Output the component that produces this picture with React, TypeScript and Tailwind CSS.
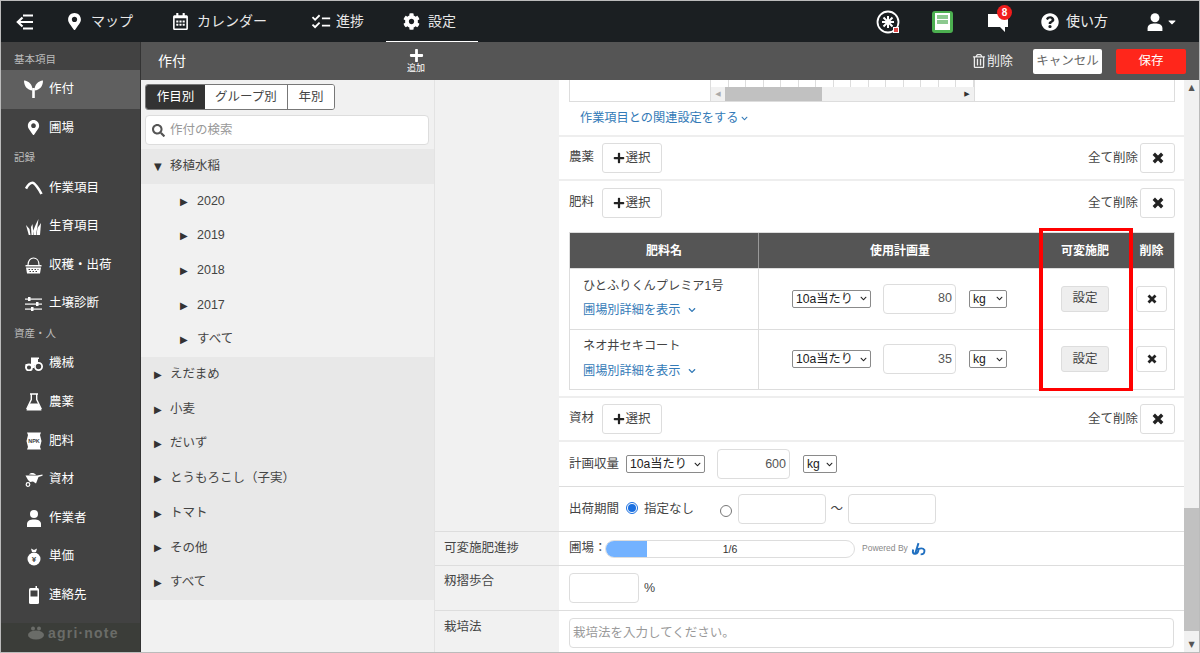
import React from 'react';
import {
  FaMapMarkerAlt,
  FaRegCalendarAlt,
  FaCog,
  FaQuestionCircle,
  FaPlus,
  FaSearch,
  FaRegTrashAlt,
  FaCaretDown,
  FaChevronDown,
} from 'react-icons/fa';
import { MdChecklist } from 'react-icons/md';

const FONT = "font-['Liberation_Sans','Noto_Sans_CJK_JP',sans-serif]";

function BackIcon() {
  return (
    <svg width="18" height="16" viewBox="0 0 18 16" fill="none" stroke="white" strokeWidth="2.2">
      <path d="M7 1.500H17M2 8H17M7 14.500H17" />
      <path d="M6.500 3.500L1.800 8L6.500 12.500" />
    </svg>
  );
}

function NavItem({ icon, label, active, className }: { icon: React.ReactNode; label: string; active?: boolean; className: string }) {
  return (
    <div className={`flex h-[42px] items-center text-[14px] text-[#e8e8e8] ${className} ${active ? 'border-b-2 border-white pt-[2px]' : ''}`}>
      {icon}
      <span>{label}</span>
    </div>
  );
}

function SideLabel({ text, className = 'h-[21.500px]' }: { text: string; className?: string }) {
  return <div className={`flex items-center pl-[13px] text-[10.500px] text-[#bdbdbd] ${className}`}>{text}</div>;
}

function SideItem({ icon, label, active }: { icon: React.ReactNode; label: string; active?: boolean }) {
  return (
    <div className={`flex h-[38.600px] items-center text-[12.500px] text-white ${active ? 'bg-[#5f5f5f]' : ''}`}>
      <span className="flex w-[47px] justify-center pl-[18px]">{icon}</span>
      <span className="pl-px">{label}</span>
    </div>
  );
}

function SeedIcon() {
  return (
    <svg width="19" height="18" viewBox="0 0 19 18" fill="white">
      <rect x="8.200" y="8" width="2.600" height="10" />
      <path d="M8.600 10.500C8.500 4.500 5 1 0 0.500C0 6 3 10 8.600 10.500Z" />
      <path d="M10.400 10.500C10.500 4.500 14 1 19 0.500C19 6 16 10 10.400 10.500Z" />
    </svg>
  );
}

function SickleIcon() {
  return (
    <svg width="18" height="14" viewBox="0 0 18 14" fill="none" stroke="white" strokeWidth="2.600">
      <path d="M1 7.500C3 4 5 1.800 7.500 1.800C9.500 1.800 14 8 16.500 13" />
    </svg>
  );
}

function GrowthIcon() {
  return (
    <svg width="16" height="16" viewBox="0 0 16 16" fill="white">
      <path d="M0 6L3.500 10L4.500 16H2.800Z" />
      <path d="M5.500 16L5 8L6.500 5L7.500 16Z" />
      <path d="M7 12L10 5L12.500 0L11.500 7L10 16H8Z" />
      <path d="M10.500 16L11.500 9L15 4L14 16Z" />
    </svg>
  );
}

function BasketIcon() {
  return (
    <svg width="17" height="17" viewBox="0 0 17 17">
      <path d="M3 8C3 3.500 5.500 1 8.500 1C11.500 1 14 3.500 14 8" fill="none" stroke="white" strokeWidth="1.200" />
      <rect x="0.500" y="8" width="16" height="1.500" fill="white" />
      <path d="M1 10.500H16L15 16.500H2Z" fill="white" />
      <path d="M3.500 12.500H13.500M4.500 14.500H12.500" stroke="#424242" strokeWidth="1" strokeDasharray="1.500 1.500" />
    </svg>
  );
}

function SlidersIcon() {
  return (
    <svg width="17" height="14" viewBox="0 0 17 14" fill="white">
      <rect y="1.500" width="17" height="1.200" />
      <rect y="6.500" width="17" height="1.200" />
      <rect y="11.500" width="17" height="1.200" />
      <rect x="3" y="0" width="2.500" height="4" />
      <rect x="11" y="5" width="2.500" height="4" />
      <rect x="6" y="10" width="2.500" height="4" />
    </svg>
  );
}

function TractorIcon() {
  return (
    <svg width="18" height="14" viewBox="0 0 18 14">
      <path d="M6 0.500H14V2H13V6H15L17 8H8L6 7V2H6Z" fill="white" />
      <path d="M0.500 7H9V11H0.500Z" fill="white" />
      <circle cx="4" cy="10.500" r="3" fill="#424242" stroke="white" strokeWidth="1.800" />
      <circle cx="13.500" cy="9.500" r="3.600" fill="#424242" stroke="white" strokeWidth="1.800" />
    </svg>
  );
}

function FlaskIcon() {
  return (
    <svg width="16" height="18" viewBox="0 0 16 18">
      <path d="M4 1H12M5.300 1V6.500L1 15.500H15L10.700 6.500V1" fill="none" stroke="white" strokeWidth="1.400" />
      <path d="M3.500 10.500H12.500L15.500 17.500H0.500Z" fill="white" />
    </svg>
  );
}

function NpkIcon() {
  return (
    <svg width="16" height="18" viewBox="0 0 16 18">
      <path d="M1 0.500H15L14 3L15.500 9L14 15L15 17.500H1L2 15L0.500 9L2 3Z" fill="white" />
      <text x="8" y="11" textAnchor="middle" fontSize="5.500" fontWeight="700" fill="#424242" fontFamily="Liberation Sans">NPK</text>
    </svg>
  );
}

function BarrowIcon() {
  return (
    <svg width="18" height="15" viewBox="0 0 18 15" fill="white">
      <path d="M4 2.500C6 0.500 9 0.500 11 3Z" />
      <path d="M0.500 3.500H12L17.500 2.500V3.800L13.500 5L11 11.500L8 9.500L5 10L3 8Z" />
      <circle cx="3" cy="12.500" r="1.800" fill="none" stroke="white" strokeWidth="1.200" />
    </svg>
  );
}

function PersonIcon() {
  return (
    <svg width="14" height="17" viewBox="0 0 14 17" fill="white">
      <circle cx="7" cy="4" r="4" />
      <path d="M0 17V14C0 10.800 3 9.500 7 9.500C11 9.500 14 10.800 14 14V17Z" />
    </svg>
  );
}

function MoneyIcon() {
  return (
    <svg width="14" height="18" viewBox="0 0 14 18">
      <path d="M4 0.500L7 2L10 0.500L9 4H5Z" fill="white" />
      <circle cx="7" cy="11" r="6.500" fill="white" />
      <text x="7" y="14" textAnchor="middle" fontSize="8" fontWeight="700" fill="#424242" fontFamily="Liberation Sans">¥</text>
    </svg>
  );
}

function PhoneIcon() {
  return (
    <svg width="10" height="18" viewBox="0 0 10 18">
      <rect x="6.500" y="0" width="1.500" height="3" fill="white" />
      <rect y="2" width="10" height="16" rx="1.500" fill="white" />
      <rect x="1.500" y="4.500" width="7" height="6" fill="#424242" />
    </svg>
  );
}

function UserGlyph() {
  return (
    <svg className="ml-[39px]" width="16" height="18" viewBox="0 0 14 17" fill="white">
      <circle cx="7" cy="4.500" r="4.200" />
      <path d="M0 17V14.500C0 11 3 10 7 10C11 10 14 11 14 14.500V17Z" />
    </svg>
  );
}

function Sidebar() {
  return (
    <div className="flex w-[140px] shrink-0 flex-col border-r border-[#333] bg-[#424242]">
      <SideLabel text="基本項目" className="h-[28px] pt-[7px]" />
      <SideItem active icon={<SeedIcon />} label="作付" />
      <SideItem icon={<FaMapMarkerAlt size={15} />} label="圃場" />
      <SideLabel text="記録" />
      <SideItem icon={<SickleIcon />} label="作業項目" />
      <SideItem icon={<GrowthIcon />} label="生育項目" />
      <SideItem icon={<BasketIcon />} label="収穫・出荷" />
      <SideItem icon={<SlidersIcon />} label="土壌診断" />
      <SideLabel text="資産・人" />
      <SideItem icon={<TractorIcon />} label="機械" />
      <SideItem icon={<FlaskIcon />} label="農薬" />
      <SideItem icon={<NpkIcon />} label="肥料" />
      <SideItem icon={<BarrowIcon />} label="資材" />
      <SideItem icon={<PersonIcon />} label="作業者" />
      <SideItem icon={<MoneyIcon />} label="単価" />
      <SideItem icon={<PhoneIcon />} label="連絡先" />
      <div className="mt-auto flex h-[29px] items-start gap-[4px] bg-[#3b3d39] pl-[27px] text-[14px] font-bold tracking-[1.200px] text-[#6a6c68]">
        <svg className="mt-[3px]" width="16" height="14" viewBox="0 0 16 14" fill="#6a6c68">
          <circle cx="5" cy="2.500" r="2" />
          <circle cx="11" cy="2.500" r="2" />
          <ellipse cx="8" cy="9" rx="8" ry="4.500" />
        </svg>
        <span>agri·note</span>
      </div>
    </div>
  );
}

function TreeRow({ text, open, child, dark }: { text: string; open?: boolean; child?: boolean; dark?: boolean }) {
  return (
    <div className={`flex h-[34.700px] items-center text-[12.500px] text-[#444] ${dark ? 'bg-[#e8e8e8]' : ''} ${child ? 'pl-[39px]' : 'pl-[13px]'}`}>
      <span className={`font-['DejaVu_Sans'] text-[10px] text-[#333] ${child ? 'w-[17px]' : 'w-[16px]'}`}>{open ? '▼' : '▶'}</span>
      <span>{text}</span>
    </div>
  );
}

function CropList() {
  return (
    <div className="flex w-[294px] shrink-0 flex-col border-r border-[#e3e3e3] bg-[#f1f1f1]">
      <div className="flex flex-col gap-[5px] px-[4px] pt-[4px] pb-[4px]">
        <div className="flex h-[26px] w-[190px] overflow-hidden rounded-[3px] border border-[#777] text-[12.500px] text-[#444]">
          <div className="flex w-[59px] items-center justify-center bg-[#333] text-white">作目別</div>
          <div className="flex w-[83px] items-center justify-center border-r border-[#777] bg-white">グループ別</div>
          <div className="flex flex-1 items-center justify-center bg-white">年別</div>
        </div>
        <div className="flex h-[30px] w-[284px] items-center gap-[5px] rounded-[4px] border border-[#ddd] bg-white pl-[6px] text-[12.500px] text-[#999]">
          <FaSearch size={13} className="text-[#555]" />
          <span>作付の検索</span>
        </div>
      </div>
      <TreeRow dark open text="移植水稲" />
      <TreeRow child text="2020" />
      <TreeRow child text="2019" />
      <TreeRow child text="2018" />
      <TreeRow child text="2017" />
      <TreeRow child text="すべて" />
      <TreeRow dark text="えだまめ" />
      <TreeRow dark text="小麦" />
      <TreeRow dark text="だいず" />
      <TreeRow dark text="とうもろこし（子実）" />
      <TreeRow dark text="トマト" />
      <TreeRow dark text="その他" />
      <TreeRow dark text="すべて" />
    </div>
  );
}

function SelectBox({ text, className }: { text: string; className: string }) {
  return (
    <div className={`flex h-[18px] items-center justify-between rounded-[2px] border border-[#8a8a8a] bg-white px-[3px] text-[12.200px] text-[#222] ${className}`}>
      <span>{text}</span>
      <FaChevronDown size={7} className="text-[#222]" />
    </div>
  );
}

function NumBox({ value, className }: { value?: string; className: string }) {
  return (
    <div className={`flex h-[30px] items-center justify-end rounded-[4px] border border-[#ddd] bg-white pr-[3px] text-[12.500px] text-[#555] ${className}`}>
      {value}
    </div>
  );
}

function XButton({ className, size }: { className: string; size: number }) {
  return (
    <div className={`flex items-center justify-center rounded-[3px] border border-[#ddd] bg-white ${className}`}>
      <svg width={size} height={size} viewBox="0 0 10 10" fill="none" stroke="#222" strokeWidth="2.800">
        <path d="M1.500 1.500L8.500 8.500M8.500 1.500L1.500 8.500" />
      </svg>
    </div>
  );
}

function SelectRow({ label, top }: { label: string; top?: boolean }) {
  return (
    <div className={`flex h-[44px] items-center px-[10px] ${top ? '' : 'border-b-2 border-[#eee]'}`}>
      <span className="w-[33px] pb-[2px] text-[12.500px] text-[#444]">{label}</span>
      <div className="flex h-[30px] w-[60px] items-center justify-center rounded-[3px] border border-[#ddd] bg-white text-[12.500px] text-[#444]">
        <FaPlus size={12} className="text-[#222]" />
        <span>選択</span>
      </div>
      <span className="ml-auto text-[12.500px] text-[#444]">全て削除</span>
      <XButton size={12} className="ml-[2px] h-[30px] w-[35px]" />
    </div>
  );
}

function FertilizerRow({ name, amount }: { name: string; amount: string }) {
  return (
    <div className="flex h-[60.500px] border-t border-[#ddd]">
      <div className="flex w-[189px] flex-col justify-center gap-[6px] border-r border-[#ddd] pb-px pl-[13px] text-[12.200px]">
        <span className="text-[#444]">{name}</span>
        <span className="flex items-center gap-[7px] text-[#337ab7]">
          圃場別詳細を表示
          <FaChevronDown size={8} />
        </span>
      </div>
      <div className="flex w-[282px] items-center pl-[33px]">
        <SelectBox text="10a当たり" className="w-[79px]" />
        <NumBox value={amount} className="ml-[12px] w-[73px]" />
        <SelectBox text="kg" className="ml-[13px] w-[38px]" />
      </div>
      <div className="flex w-[88px] items-center justify-center">
        <div className="flex h-[26px] w-[48px] items-center justify-center rounded-[3px] border border-[#ddd] bg-[#eee] text-[12.500px] text-[#444]">設定</div>
      </div>
      <div className="flex flex-1 items-center justify-center">
        <XButton size={10} className="h-[26px] w-[31px]" />
      </div>
    </div>
  );
}

function SideHead({ text, className }: { text: string; className: string }) {
  return <div className={`w-[124px] shrink-0 border-b border-[#ddd] bg-[#f1f1f1] pl-[9px] text-[12.500px] text-[#444] ${className}`}>{text}</div>;
}

function GridTop() {
  const cells = Array.from({ length: 15 }, (_, i) => i);
  return (
    <div className="ml-[10px] mr-[10px] flex h-[22px] w-[606px] border-x border-b border-[#ddd]">
      <div className="w-[141px] shrink-0 border-r border-[#ddd]" />
      <div className="flex w-[264px] shrink-0 flex-col border-r border-[#ddd]">
        <div className="flex h-[7px]">
          {cells.map((i) => (
            <div key={i} className="h-full w-[17.600px] border-r border-[#ddd]" />
          ))}
        </div>
        <div className="flex h-[14px] items-center bg-[#f1f1f1]">
          <span className="w-[14px] text-center font-['DejaVu_Sans'] text-[7px] text-[#aaa]">◀</span>
          <div className="h-full w-[97px] bg-[#c1c1c1]" />
          <span className="ml-auto w-[14px] text-center font-['DejaVu_Sans'] text-[7px] text-[#333]">▶</span>
        </div>
      </div>
    </div>
  );
}

function Detail() {
  return (
    <div className="flex min-w-0 flex-1 flex-col overflow-hidden bg-white">
      <div className="flex h-[451px]">
        <div className="w-[124px] shrink-0 bg-[#f1f1f1]" />
        <div className="relative flex-1">
          <GridTop />
          <div className="flex h-[35px] items-center border-b-2 border-[#eee] pl-[21px] text-[12.200px] text-[#337ab7]">
            <span className="flex items-center gap-[3px]">
              作業項目との関連設定をする
              <FaChevronDown size={7} />
            </span>
          </div>
          <SelectRow label="農薬" />
          <SelectRow top label="肥料" />
          <div className="mx-[10px] mt-[7px] w-[606px] border border-[#ddd]">
            <div className="flex h-[35px] bg-[#555] text-[12px] font-bold text-white">
              <div className="flex w-[189px] items-center justify-center border-r border-[#999]">肥料名</div>
              <div className="flex w-[282px] items-center justify-center">使用計画量</div>
              <div className="flex w-[88px] items-center justify-center">可変施肥</div>
              <div className="flex flex-1 items-center justify-center">削除</div>
            </div>
            <FertilizerRow name="ひとふりくんプレミア1号" amount="80" />
            <FertilizerRow name="ネオ井セキコート" amount="35" />
          </div>
          <div className="mt-[6px] border-t-2 border-[#eee]">
            <SelectRow label="資材" />
          </div>
          <div className="flex h-[45px] items-center border-b border-[#ddd] pl-[10px] text-[12.500px] text-[#444]">
            <span>計画収量</span>
            <SelectBox text="10a当たり" className="ml-[7px] w-[79px]" />
            <NumBox value="600" className="ml-[12px] w-[73px]" />
            <SelectBox text="kg" className="ml-[13px] w-[34px]" />
          </div>
          <div className="flex h-[44px] items-center pl-[10px] text-[12.500px] text-[#444]">
            <span>出荷期間</span>
            <span className="mb-[3px] ml-[7px] flex h-[12px] w-[12px] items-center justify-center rounded-full border border-[#1a6fe0]">
              <span className="h-[8px] w-[8px] rounded-full bg-[#1a6fe0]" />
            </span>
            <span className="ml-[6px]">指定なし</span>
            <span className="mt-[3px] ml-[26px] h-[12px] w-[12px] rounded-full border border-[#777]" />
            <NumBox className="ml-[6px] w-[88px]" />
            <span className="mx-[4.500px]">～</span>
            <NumBox className="w-[88px]" />
          </div>
          {/* red annotation over the table */}
          <div className="pointer-events-none absolute top-[148px] left-[480px] h-[163px] w-[94px] border-x-4 border-y-[3px] border-[#f00]" />
        </div>
      </div>
      <div className="flex h-[35px] border-t border-[#ddd]">
        <SideHead text="可変施肥進捗" className="pt-[7px]" />
        <div className="flex flex-1 items-center border-b border-[#ddd] pl-[10px] text-[12.500px] text-[#444]">
          <span className="w-[36px] shrink-0 whitespace-nowrap">圃場：</span>
          <div className="flex h-[18px] w-[250px] overflow-hidden rounded-full border border-[#ddd]">
            <div className="w-[41px] bg-[#73b2ff]" />
            <div className="flex-1 pr-[41px] text-center text-[10.500px] leading-[16px] text-[#333]">1/6</div>
          </div>
          <span className="ml-[7px] text-[8.500px] text-[#888]">Powered By</span>
          <svg className="ml-[3px]" width="15" height="14" viewBox="0 0 14 12" fill="none" stroke="#1f6fc0" strokeWidth="1.800">
            <path d="M7 0.500L4 10M2 6.500Q1 11 4 10.500Q7 10 7 6Q11 4.500 12.500 7Q13 11 9 11" />
          </svg>
        </div>
      </div>
      <div className="flex h-[45px]">
        <SideHead text="籾摺歩合" className="pt-[6px]" />
        <div className="flex flex-1 items-center border-b border-[#ddd] pl-[10px] text-[12.500px] text-[#444]">
          <NumBox className="w-[70px]" />
          <span className="ml-[5px]">%</span>
        </div>
      </div>
      <div className="flex flex-1">
        <div className="w-[124px] shrink-0 bg-[#f1f1f1] pt-[7px] pl-[9px] text-[12.500px] text-[#444]">栽培法</div>
        <div className="flex flex-1 px-[10px] pt-[7px]">
          <div className="flex h-[30px] w-full items-center rounded-[4px] border border-[#ddd] pl-[3px] text-[12.500px] text-[#999]">栽培法を入力してください。</div>
        </div>
      </div>
    </div>
  );
}

export default function App() {
  return (
    <div className={`flex h-[653px] w-[1200px] flex-col overflow-hidden border border-[#bbb] ${FONT}`}>
      {/* top bar */}
      <div className="flex h-[41px] shrink-0 items-center bg-[#1b1f22]">
        <div className="flex w-[65px] justify-center pr-[18px]">
          <BackIcon />
        </div>
        <NavItem className="w-[106px] gap-2" icon={<FaMapMarkerAlt size={17} className="text-white" />} label="マップ" />
        <NavItem className="w-[138px] gap-2" icon={<FaRegCalendarAlt size={17} className="text-white" />} label="カレンダー" />
        <NavItem className="w-[76px] gap-[4px]" icon={<MdChecklist size={22} className="text-white" />} label="進捗" />
        <NavItem active className="w-[92px] gap-2 pl-[17px]" icon={<FaCog size={17} className="text-white" />} label="設定" />
        <div className="ml-auto flex items-center text-white">
          <svg width="24" height="24" viewBox="0 0 24 24">
            <circle cx="12" cy="12" r="10.500" fill="none" stroke="white" strokeWidth="1.800" />
            <path d="M6 12H18M12 6V18M7.500 7.500L16.500 16.500M16.500 7.500L7.500 16.500" stroke="white" strokeWidth="2" />
            <rect x="17.500" y="17.500" width="5" height="5" fill="#e04a4a" stroke="white" />
          </svg>
          <div className="ml-[32px] flex h-[22px] w-[21px] items-center justify-center rounded-[3px] bg-[#4caf50]">
            <div className="flex h-[17px] w-[15px] flex-col gap-px bg-white p-[2px]">
              <div className="h-[4px] bg-[#8cc98f]" />
              <div className="h-[4px] bg-[#8cc98f]" />
            </div>
          </div>
          <div className="relative mt-[1px] ml-[35px]">
            <svg width="20" height="19" viewBox="0 0 20 19" fill="white">
              <path d="M0 1H20V14H17V19L12 14H0Z" />
            </svg>
            <div className="absolute -top-[8px] left-[9px] flex h-[15px] w-[15px] items-center justify-center rounded-full bg-[#f01c1c] text-[10px] font-bold text-white">8</div>
          </div>
          <FaQuestionCircle size={18} className="ml-[33px]" />
          <span className="ml-[7px] text-[14px] text-[#eee]">使い方</span>
          <UserGlyph />
          <FaCaretDown size={12} className="mr-[21px] ml-[3px]" />
        </div>
      </div>
      <div className="flex min-h-0 flex-1">
        <Sidebar />
        <div className="flex min-w-0 flex-1 flex-col">
          {/* sub header */}
          <div className="flex h-[38px] shrink-0 items-center bg-[#555] text-white">
            <span className="ml-[17px] text-[14px]">作付</span>
            <div className="ml-[220px] flex w-[20px] flex-col items-center">
              <FaPlus size={15} />
              <span className="text-[9px] leading-[11px]">追加</span>
            </div>
            <div className="ml-auto flex items-center text-[13px] text-[#eee]">
              <FaRegTrashAlt size={14} />
              <span className="ml-px">削除</span>
            </div>
            <div className="ml-[20px] flex h-[25px] w-[69px] items-center justify-center rounded-[2px] bg-white text-[12.500px] text-[#666]">キャンセル</div>
            <div className="mr-[13px] ml-[14px] flex h-[25px] w-[70px] items-center justify-center rounded-[2px] bg-[#ff261b] text-[12.500px] text-white">保存</div>
          </div>
          <div className="flex min-h-0 flex-1">
            <CropList />
            <Detail />
            {/* page scrollbar */}
            <div className="flex w-[15px] shrink-0 flex-col items-center bg-[#f1f1f1]">
              <span className="mt-[2px] font-['DejaVu_Sans'] text-[8px] text-[#555]">▲</span>
              <div className="mt-[414px] h-[123px] w-full bg-[#c1c1c1]" />
              <span className="mt-auto mb-[1px] font-['DejaVu_Sans'] text-[8px] text-[#555]">▼</span>
            </div>
          </div>
        </div>
      </div>
    </div>
  );
}
